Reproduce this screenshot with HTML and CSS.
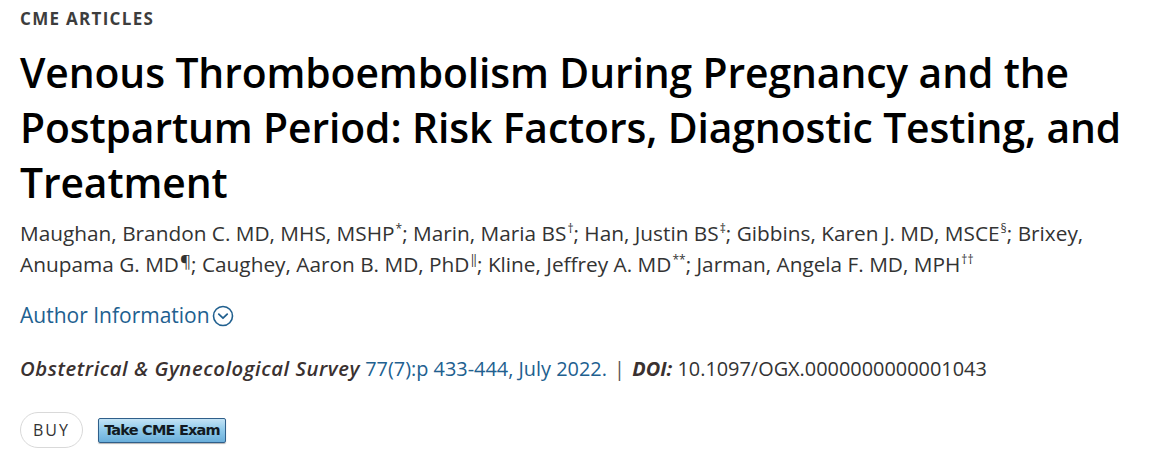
FILE: index.html
```html
<!DOCTYPE html>
<html lang="en">
<head>
<meta charset="utf-8">
<title>Venous Thromboembolism During Pregnancy and the Postpartum Period</title>
<link rel="stylesheet" href="styles.css">
</head>
<body>
<main class="article-header">
  <div class="subject">CME ARTICLES</div>
  <h1 class="title">Venous Thromboembolism During Pregnancy and the Postpartum Period: Risk Factors, Diagnostic Testing, and Treatment</h1>
  <p class="authors">Maughan, Brandon C. MD, MHS, MSHP<sup>*</sup>; Marin, Maria BS<sup>†</sup>; Han, Justin BS<sup>‡</sup>; Gibbins, Karen J. MD, MSCE<sup>§</sup>; Brixey, Anupama G. MD<sup class="pil">¶</sup>; Caughey, Aaron B. MD, PhD<sup>‖</sup>; Kline, Jeffrey A. MD<sup>**</sup>; Jarman, Angela F. MD, MPH<sup>††</sup></p>
  <a class="author-info" href="#">Author Information<svg class="chev" width="22" height="22" viewBox="0 0 22 22" aria-hidden="true"><circle cx="11" cy="11" r="9.5" fill="none" stroke="currentColor" stroke-width="1.6"/><path d="M6.8 9.2 L11 13.2 L15.2 9.2" fill="none" stroke="currentColor" stroke-width="1.8" stroke-linecap="round" stroke-linejoin="round"/></svg></a>
  <p class="citation"><span class="journal">Obstetrical &amp; Gynecological Survey</span> <a class="issue" href="#">77(7):p 433-444, July 2022.</a> <span class="sep">|</span> <span class="doi-label">DOI:</span> <span class="doi">10.1097/OGX.0000000000001043</span></p>
  <div class="actions">
    <a class="buy" href="#">BUY</a>
    <a class="cme" href="#">Take CME Exam</a>
  </div>
</main>
</body>
</html>
```
FILE: styles.css
```css
html, body {
  margin: 0;
  padding: 0;
  background: #ffffff;
}

body {
  font-family: "Open Sans", "Noto Sans", "Liberation Sans", sans-serif;
  color: #333333;
}

.article-header {
  padding: 7px 20px 0 20px;
  width: 1123px;
}

.subject {
  font-size: 17px;
  font-weight: 700;
  letter-spacing: 1.3px;
  color: #3d3d3d;
  line-height: 24px;
}

.title {
  margin: 14px 0 0 0;
  font-size: 40.8px;
  font-weight: 600;
  line-height: 55px;
  color: #000000;
  letter-spacing: -0.1px;
}

.authors {
  margin: 8px 0 0 0;
  font-size: 20.8px;
  line-height: 31px;
  color: #333333;
}

.authors sup {
  position: relative;
  top: -8px;
  font-size: 12px;
  line-height: 1;
  vertical-align: baseline;
  margin-left: 1px;
}

.authors sup.pil {
  font-size: 17px;
  top: -5px;
}

.author-info {
  display: inline-flex;
  align-items: center;
  margin-top: 21px;
  font-size: 21px;
  line-height: 28px;
  color: #21608f;
  text-decoration: none;
}

.chev {
  margin-left: 2px;
  margin-top: 2px;
}

.citation {
  margin: 25px 0 0 0;
  font-size: 19.9px;
  line-height: 28px;
  color: #333333;
}

.journal {
  font-style: italic;
  font-weight: 600;
  font-size: 20.3px;
  letter-spacing: 0.55px;
  color: #3a3130;
}

.issue {
  color: #21608f;
  text-decoration: none;
}

.sep {
  color: #555555;
  margin: 0 2px;
}

.doi-label {
  font-style: italic;
  font-weight: 700;
  color: #3a3130;
}

.actions {
  display: flex;
  align-items: center;
  gap: 15px;
  margin-top: 29px;
}

.buy {
  display: inline-flex;
  align-items: center;
  justify-content: center;
  width: 61px;
  height: 34px;
  border: 1px solid #d9d9d9;
  border-radius: 18px;
  font-size: 16px;
  letter-spacing: 2px;
  color: #333333;
  text-decoration: none;
}

.cme {
  display: inline-flex;
  align-items: center;
  justify-content: center;
  width: 126px;
  height: 23px;
  border: 1px solid #2f5f8a;
  border-radius: 2px;
  background: linear-gradient(#c3e3f5, #92cbeb 45%, #6aafdb);
  font-family: "DejaVu Sans", "Liberation Sans", sans-serif;
  font-size: 14.5px;
  font-weight: 700;
  letter-spacing: -0.8px;
  color: #111a22;
  text-decoration: none;
  box-shadow: 0 1px 1px rgba(0,0,0,0.3);
}
```
